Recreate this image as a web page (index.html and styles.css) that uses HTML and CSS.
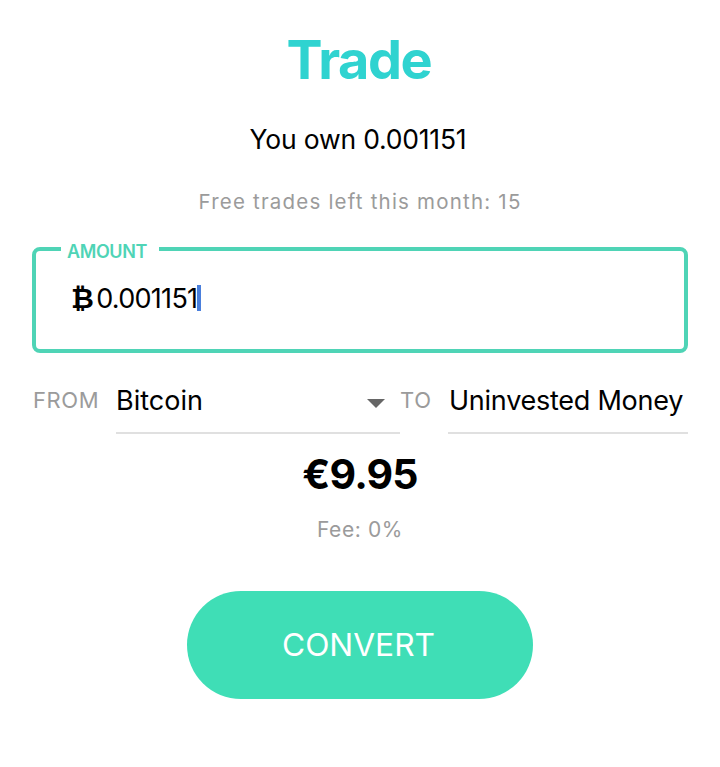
FILE: index.html
```html
<!DOCTYPE html>
<html lang="en">
<head>
<meta charset="utf-8">
<title>Trade</title>
<link rel="stylesheet" href="styles.css">
</head>
<body>
<main class="page">
  <h1 class="title">Trade</h1>
  <p class="own">You own 0.001151</p>
  <p class="free">Free trades left this month: 15</p>
  <fieldset class="amount">
    <legend class="amount-label">AMOUNT</legend>
    <div class="amount-value"><span class="btc">₿</span><span>0.001151</span><span class="caret"></span></div>
  </fieldset>
  <div class="pair">
    <span class="pair-label from-label">FROM</span>
    <div class="select from"><span>Bitcoin</span><span class="arrow"></span></div>
    <span class="pair-label to-label">TO</span>
    <div class="select to"><span>Uninvested Money</span></div>
  </div>
  <p class="price">€9.95</p>
  <p class="fee">Fee: 0%</p>
  <button class="convert">CONVERT</button>
</main>
</body>
</html>
```

FILE: styles.css
```css
* { box-sizing: border-box; }
html, body { margin: 0; background: #fff; }
body { font-family: Inter, "Liberation Sans", sans-serif; color: #000; }
.page { width: 720px; height: 767px; padding: 0 32px; display: flex; flex-direction: column; align-items: center; overflow: hidden; }
.title { margin: 27px 2px 0 0; height: 66px; font-size: 54px; line-height: 66px; font-weight: 700; color: #2fd3d0; letter-spacing: -1.4px; }
.own { margin: 31px 4px 0 0; height: 30px; font-size: 26.5px; line-height: 30px; font-weight: 400; letter-spacing: -0.2px; }
.free { margin: 35px 0 0; height: 26px; font-size: 20.5px; line-height: 26px; color: #9b9b9b; letter-spacing: 1.2px; }
.amount { width: 656px; height: 117px; margin: 21px 0 0; padding: 0 0 0 34px; border: 4px solid #4fd4b6; border-radius: 8px; min-width: 0; }
.amount-label { padding: 6px 12px 0 6px; margin: 0 0 0 -9px; font-size: 18px; line-height: 20px; font-weight: 600; color: #4fd4b6; letter-spacing: -0.4px; }
.amount-value { display: flex; align-items: center; height: 34px; margin-top: 19px; margin-left: 1px; font-size: 27px; letter-spacing: -0.7px; }
.btc { font-family: "DejaVu Sans", sans-serif; font-weight: 700; font-size: 28px; margin-right: 3px; }
.caret { display: inline-block; width: 4px; height: 26px; background: #4a7fdc; }
.pair { width: 656px; height: 62px; margin-top: 19px; display: flex; align-items: flex-start; }
.pair-label { flex: none; font-size: 22px; line-height: 28px; margin-top: 14px; color: #9b9b9b; letter-spacing: 0.6px; }
.from-label { width: 84px; padding-left: 1px; }
.select { height: 62px; padding-top: 13px; border-bottom: 2px solid #e0e0e0; font-size: 27px; line-height: 32px; display: flex; justify-content: space-between; align-items: flex-start; }
.from { width: 284px; padding-right: 15px; }
.to-label { width: 48px; }
.to { width: 240px; padding-left: 1px; white-space: nowrap; letter-spacing: -0.25px; }
.arrow { width: 0; height: 0; margin-top: 14px; border-left: 9px solid transparent; border-right: 9px solid transparent; border-top: 9px solid #666; }
.price { margin: 15px 0 0; height: 50px; font-size: 41px; line-height: 50px; font-weight: 700; letter-spacing: -0.8px; }
.fee { margin: 18px 0 0; height: 26px; font-size: 21px; line-height: 26px; color: #9b9b9b; letter-spacing: 0.6px; }
.convert { width: 346px; height: 108px; margin-top: 48px; padding: 0 3px 2px 0; border: 0; border-radius: 54px; background: #3fdeb6; color: #fff; font-family: inherit; font-size: 31.7px; font-weight: 400; }
```
